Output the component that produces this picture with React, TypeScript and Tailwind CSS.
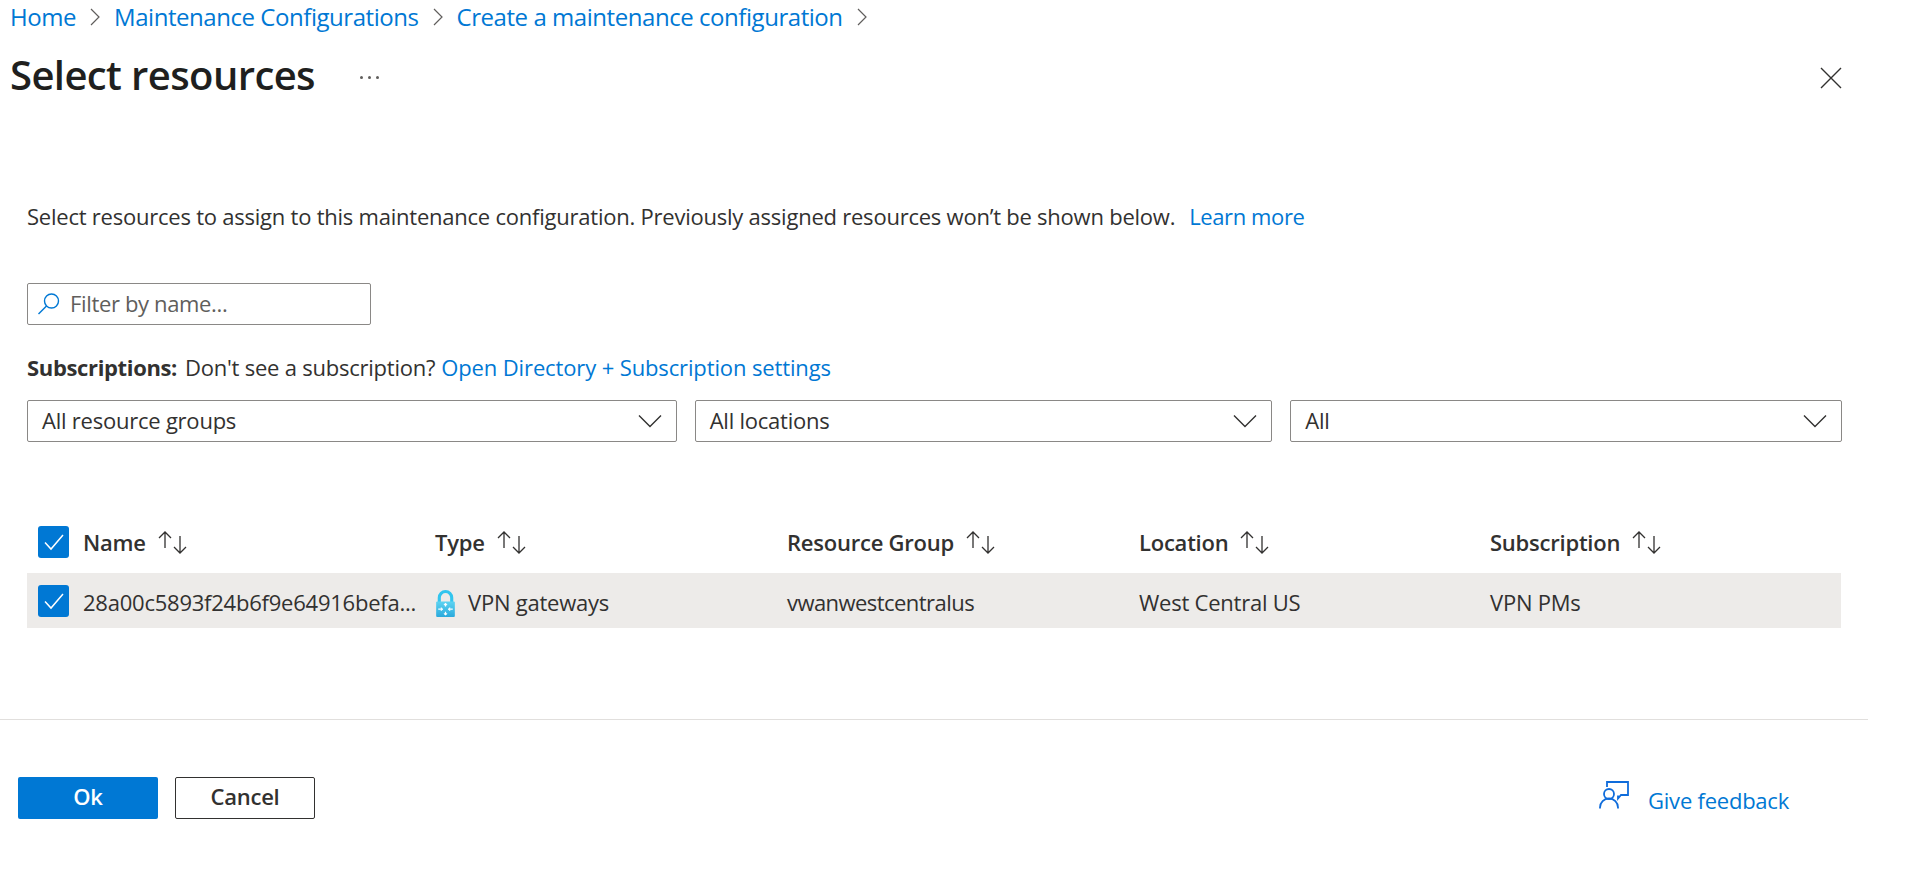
import React from "react";

const font = { fontFamily: '"Open Sans", "Noto Sans", sans-serif' };

function Chevron() {
  return (
    <svg width="14" height="22" viewBox="0 0 14 22" fill="none" stroke="#605e5c" strokeWidth="1.2" className="shrink-0">
      <path d="M3 3l8 8-8 8" />
    </svg>
  );
}

function Caret() {
  return (
    <svg width="24" height="14" viewBox="0 0 24 14" fill="none" stroke="#323130" strokeWidth="1.4">
      <path d="M1 1.500l11 11 11-11" />
    </svg>
  );
}

function Sort() {
  return (
    <svg width="31" height="25" viewBox="0 0 31 25" fill="none" stroke="#323130" strokeWidth="1.3" className="shrink-0">
      <path d="M8 18V2M2 8L8 2l6 6" />
      <path d="M23 6v17M17 17l6 6 6-6" />
    </svg>
  );
}

function Check() {
  return (
    <div className="w-[31px] h-[32px] bg-[#0078d4] rounded-[3px] flex items-center justify-center shrink-0">
      <svg width="22" height="18" viewBox="0 0 22 18" fill="none" stroke="white" strokeWidth="1.5">
        <path d="M2 9.500l6 6.500L20 2" />
      </svg>
    </div>
  );
}

function Lock() {
  return (
    <svg width="21" height="28" viewBox="0 0 20 27" className="shrink-0 mt-[3px]">
      <defs>
        <linearGradient id="lockbody" x1="0" y1="0" x2="0" y2="1">
          <stop offset="0" stopColor="#5ed4f2" />
          <stop offset="1" stopColor="#2aa9dc" />
        </linearGradient>
      </defs>
      <path d="M4 12V7.500a6 6 0 0 1 12 0V12" fill="none" stroke="#32c5ee" strokeWidth="3" />
      <rect x="1" y="11" width="18" height="15" rx="1" fill="url(#lockbody)" />
      <path d="M10 13v3M10 21v3M3 18.500h4M13 18.500h4" stroke="white" strokeWidth="1.200" />
      <path d="M8.500 14.500L10 13l1.500 1.500M8.500 22.500L10 24l1.500-1.500M5.500 17L7 18.500 5.500 20M14.500 17L13 18.500l1.500 1.500" fill="none" stroke="white" strokeWidth="1" />
    </svg>
  );
}

function Select({ label, className }: { label: string; className: string }) {
  return (
    <div className={`h-[42px] border border-[#8a8886] rounded-[2px] flex items-center justify-between pl-[14px] pr-[14px] ${className}`}>
      <span className="text-[22px] text-[#323130] pb-[2px]">{label}</span>
      <Caret />
    </div>
  );
}

function Head({ label, className }: { label: string; className: string }) {
  return (
    <div className={`flex items-center gap-[11px] font-semibold text-[22px] text-[#323130] ${className}`}>
      <span>{label}</span>
      <Sort />
    </div>
  );
}

export default function App() {
  return (
    <div className="w-[1911px] h-[881px] bg-white overflow-hidden flex flex-col tracking-[-0.23px]" style={font}>
      <div className="h-[34px] pl-[10px] flex items-center gap-[12px] text-[24px] tracking-[-0.45px] text-[#0078d4]">
        <span>Home</span>
        <Chevron />
        <span>Maintenance Configurations</span>
        <Chevron />
        <span>Create a maintenance configuration</span>
        <Chevron />
      </div>
      <div className="h-[80px] pt-[2px] pl-[10px] pr-[69px] flex items-center">
        <h1 className="text-[40px] tracking-[-0.6px] font-semibold text-[#201f1e] w-[350px]">Select resources</h1>
        <div className="flex gap-[5px] mt-[5px]">
          <span className="w-[3px] h-[3px] rounded-full bg-[#605e5c]" />
          <span className="w-[3px] h-[3px] rounded-full bg-[#605e5c]" />
          <span className="w-[3px] h-[3px] rounded-full bg-[#605e5c]" />
        </div>
        <svg width="22" height="22" viewBox="0 0 22 22" fill="none" stroke="#323130" strokeWidth="1.4" className="ml-auto mt-[5px]">
          <path d="M1 1l20 20M21 1L1 21" />
        </svg>
      </div>

      <div className="pl-[27px] pr-[69px] pt-[85px] flex-1 flex flex-col">
        <div className="text-[22px] text-[#323130] h-[34px] flex items-center">
          <span>Select resources to assign to this maintenance configuration. Previously assigned resources won’t be shown below.</span>
          <span className="ml-[14px] text-[#0078d4] tracking-[-0.4px]">Learn more</span>
        </div>

        <div className="mt-[50px] w-[344px] h-[42px] border border-[#8a8886] rounded-[2px] flex items-center pl-[8px] gap-[8px]">
          <svg width="26" height="26" viewBox="0 0 26 26" fill="none" stroke="#0078d4" strokeWidth="1.4">
            <circle cx="15.500" cy="10" r="7" />
            <path d="M10.500 15L2.500 23" />
          </svg>
          <span className="text-[22px] text-[#605e5c] pb-[2px] tracking-[-0.35px]">Filter by name...</span>
        </div>

        <div className="mt-[25px] h-[34px] flex items-center text-[22px] text-[#323130]">
          <span className="font-bold tracking-[-0.35px]">Subscriptions:</span>
          <span className="ml-[8px]">Don't see a subscription?</span>
          <span className="ml-[6px] text-[#0078d4] tracking-[-0.13px]">Open Directory + Subscription settings</span>
        </div>

        <div className="mt-[16px] flex gap-[18px] w-[1815px]">
          <Select label="All resource groups" className="w-[650px]" />
          <Select label="All locations" className="w-[578px]" />
          <Select label="All" className="w-[552px]" />
        </div>

        <div className="mt-[69px] h-[62px] w-[1814px] flex items-center pl-[11px]">
          <Check />
          <Head label="Name" className="ml-[14px] w-[352px]" />
          <Head label="Type" className="w-[352px]" />
          <Head label="Resource Group" className="w-[352px]" />
          <Head label="Location" className="w-[351px]" />
          <Head label="Subscription" className="w-[300px]" />
        </div>
        <div className="h-[55px] w-[1814px] bg-[#edebe9] flex items-center pl-[11px] text-[22px] text-[#323130]">
          <Check />
          <span className="ml-[14px] w-[352px] pt-[4px] whitespace-nowrap">28a00c5893f24b6f9e64916befa...</span>
          <span className="w-[352px] pt-[4px] flex items-center gap-[12px]">
            <Lock />
            VPN gateways
          </span>
          <span className="w-[352px] pt-[4px] tracking-[-0.55px]">vwanwestcentralus</span>
          <span className="w-[351px] pt-[4px]">West Central US</span>
          <span className="w-[300px] pt-[4px]">VPN PMs</span>
        </div>
      </div>

      <div className="w-[1868px] h-[162px] border-t border-[#e1dfdd] pl-[18px] pr-[79px] flex items-center">
        <button className="w-[140px] h-[42px] pb-[3px] rounded-[2px] bg-[#0078d4] text-white font-semibold text-[22px] mb-[5px]">Ok</button>
        <button className="ml-[17px] w-[140px] h-[42px] pb-[3px] rounded-[2px] border border-[#323130] bg-white text-[#323130] font-semibold text-[22px] mb-[5px]">Cancel</button>
        <div className="ml-auto flex items-center gap-[19px] text-[22px] text-[#0078d4]">
          <svg width="30" height="28" viewBox="0 0 30 28" fill="none" stroke="#0f6cdb" strokeWidth="1.8" className="mb-[12px]">
            <path d="M8 6V1h21v13h-7l-3 3.500v-3" />
            <circle cx="10" cy="13" r="5" />
            <path d="M1 27.500v-1a9 9 0 0 1 18 0v1" />
          </svg>
          <span>Give feedback</span>
        </div>
      </div>
    </div>
  );
}
